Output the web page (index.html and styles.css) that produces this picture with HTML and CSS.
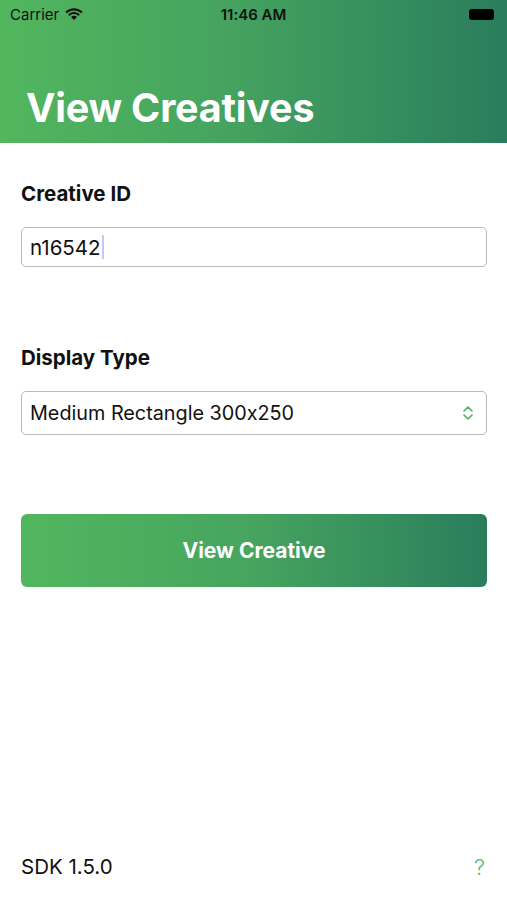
FILE: index.html
```html
<!DOCTYPE html>
<html lang="en">
  <head>
    <title>View Creatives</title>
    <meta name="viewport" content="width=device-width, initial-scale=1.0">
    <link rel="stylesheet" href="styles.css">
  </head>
  <body>
    <div class="page">
      <div class="header">
        <div class="status-bar">
          <div class="carrier">
            Carrier
            <svg class="wifi" width="18" height="13" viewBox="0 0 17 12">
              <path d="M8.5 2.2c2.6 0 5 1 6.8 2.7l1.3-1.4C14.5 1.4 11.6.2 8.5.2S2.5 1.4.4 3.5l1.3 1.4C3.5 3.2 5.9 2.2 8.5 2.2z" fill="#111"/>
              <path d="M8.5 5.6c1.6 0 3.1.6 4.2 1.7l1.3-1.4C12.6 4.5 10.6 3.6 8.5 3.6S4.4 4.5 3 5.9l1.3 1.4c1.1-1.1 2.6-1.7 4.2-1.7z" fill="#111"/>
              <path d="M8.5 7.2c-1.1 0-2.1.4-2.8 1.1l2.8 3 2.8-3c-.7-.7-1.7-1.1-2.8-1.1z" fill="#111"/>
            </svg>
          </div>
          <div class="clock">11:46 AM</div>
          <div class="battery">
            <span class="battery-body"></span>
            <span class="battery-nub"></span>
          </div>
        </div>
        <h1 class="title">View Creatives</h1>
      </div>

      <div class="form">
        <label class="field-label" for="creative-id">Creative ID</label>
        <div class="text-box">
          <span class="value">n16542</span><span class="caret"></span>
        </div>

        <label class="field-label second">Display Type</label>
        <div class="select-box">
          <span class="value">Medium Rectangle 300x250</span>
          <svg class="chevrons" width="12" height="16" viewBox="0 0 12 16">
            <path d="M2 6l4-4 4 4M2 10l4 4 4-4" fill="none" stroke="#4caf5f" stroke-width="1.6" stroke-linecap="round" stroke-linejoin="round"/>
          </svg>
        </div>

        <button class="view-button">View Creative</button>
      </div>

      <div class="footer">
        <span class="sdk">SDK 1.5.0</span>
        <span class="help">?</span>
      </div>
    </div>
  </body>
</html>
```

FILE: styles.css
```css
html, body {
  margin: 0;
  padding: 0;
  background: #fff;
}
body {
  font-family: Inter, "Noto Sans", sans-serif;
  font-feature-settings: "calt" 0;
  color: #111;
}
.page {
  display: flex;
  flex-direction: column;
  min-height: 900px;
}
.header {
  background: linear-gradient(90deg, #52b65e 0%, #45a35f 45%, #2a7d5c 100%);
  height: 143px;
  box-sizing: border-box;
}
.status-bar {
  display: flex;
  justify-content: space-between;
  align-items: center;
  height: 28px;
  padding: 0 10px 0 10px;
  font-size: 15px;
  color: #111;
}
.carrier {
  display: flex;
  align-items: center;
  gap: 6px;
  width: 100px;
}
.clock {
  font-weight: 600;
}
.battery {
  display: flex;
  align-items: center;
  justify-content: flex-end;
  width: 100px;
}
.battery-body {
  width: 25px;
  height: 11px;
  background: #000;
  border-radius: 3px;
}
.battery-nub {
  width: 2px;
  height: 4px;
  margin-left: 1px;
  background: #2f7f5c;
  border-radius: 0 1px 1px 0;
}
.title {
  margin: 0;
  padding: 58px 0 0 26px;
  font-size: 39.5px;
  font-weight: 700;
  line-height: 44px;
  color: #fff;
  letter-spacing: -0.2px;
}
.form {
  display: flex;
  flex-direction: column;
  padding: 39px 20px 0 21px;
}
.field-label {
  font-size: 20.5px;
  font-weight: 700;
  line-height: 24px;
  margin-bottom: 21px;
}
.field-label.second {
  margin-top: 79px;
}
.text-box, .select-box {
  display: flex;
  align-items: center;
  box-sizing: border-box;
  border: 1.5px solid #b9b9b9;
  border-radius: 5px;
  padding: 0 8px;
  font-size: 20.5px;
}
.text-box {
  height: 40px;
}
.select-box {
  height: 44px;
  justify-content: space-between;
  padding-right: 12px;
  font-size: 19.8px;
}
.caret {
  width: 2px;
  height: 24px;
  background: #c9c6f5;
  margin-left: 1px;
}
.view-button {
  margin-top: 79px;
  height: 73px;
  border: none;
  border-radius: 6px;
  background: linear-gradient(90deg, #52b65e 0%, #46a45f 50%, #2a7d5c 100%);
  color: #fff;
  font-family: Inter, "Noto Sans", sans-serif;
  font-size: 21px;
  font-weight: 700;
}
.footer {
  margin-top: auto;
  display: flex;
  justify-content: space-between;
  align-items: center;
  padding: 0 22px 21px 21px;
  font-size: 20.5px;
  line-height: 24px;
}
.help {
  color: #5cb86a;
  font-size: 22px;
  font-weight: 300;
}
```
